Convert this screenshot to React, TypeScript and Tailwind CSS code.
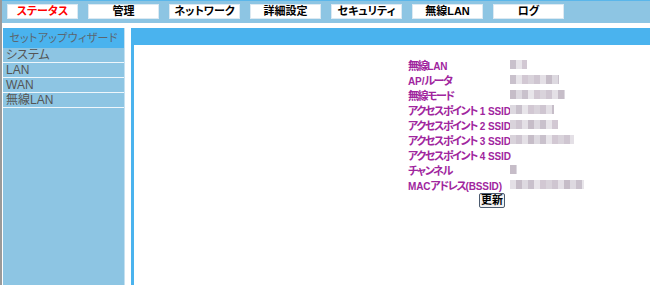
import React from "react";

const tabs = ["ステータス", "管理", "ネットワーク", "詳細設定", "セキュリティ", "無線LAN", "ログ"];
const menu = ["システム", "LAN", "WAN", "無線LAN"];

// ぼかし済みの値（幅はピクセル数）
const rows: { label: string; blur: number }[] = [
	{ label: "無線LAN", blur: 17 },
	{ label: "AP/ルータ", blur: 49 },
	{ label: "無線モード", blur: 55 },
	{ label: "アクセスポイント 1 SSID", blur: 44 },
	{ label: "アクセスポイント 2 SSID", blur: 48 },
	{ label: "アクセスポイント 3 SSID", blur: 64 },
	{ label: "アクセスポイント 4 SSID", blur: 0 },
	{ label: "チャンネル", blur: 7 },
	{ label: "MACアドレス(BSSID)", blur: 74 },
];

const shades = ["#d9d3db", "#c9c1cc", "#e4e0e6", "#d2c8d3", "#ddd9e0", "#cfc6d1", "#e8e5ea", "#c6bdc8"];

function Blur({ width }: { width: number }) {
	const cells = Math.ceil(width / 6);
	return (
		<div className="flex h-[9px] overflow-hidden" style={{ width }}>
			{Array.from({ length: cells }).map((_, i) => (
				<div
					key={i}
					className="h-full w-[6px] shrink-0"
					style={{ backgroundColor: shades[(i * 5 + width) % shades.length] }}
				/>
			))}
		</div>
	);
}

// 英数字と日本語で字幅を変える
function Label({ text }: { text: string }) {
	const parts = text.match(/[\x20-\x7e]+|[^\x20-\x7e]+/g) ?? [];
	return (
		<>
			{parts.map((p, i) =>
				/^[\x20-\x7e]+$/.test(p) ? (
					<span key={i} className="text-[10px] tracking-[-0.1px]">
						{p}
					</span>
				) : (
					<span key={i} className="text-[11px] tracking-[-1.4px]">
						{p}
					</span>
				),
			)}
		</>
	);
}

export default function App() {
	return (
		<div className="flex h-[285px] w-[650px] flex-col overflow-hidden border-l-2 border-[#9a9a9a] bg-white font-['Liberation_Sans','Noto_Sans_CJK_JP',sans-serif] [font-feature-settings:'palt']">
			<div className="flex h-[23px] shrink-0 items-start gap-[10px] border-t border-[#5ab6ea] bg-[#8dc5e3] pl-[5px] pt-[3px]">
				{tabs.map((t, i) => (
					<div
						key={t}
						className={`flex h-[15px] w-[71px] items-center justify-center border border-[#dce9f2] bg-white text-[11px] font-bold leading-none ${i === 0 ? "text-[#ff0000]" : "text-black"}`}
					>
						{t}
					</div>
				))}
			</div>
			<div className="flex flex-1 pt-[5px]">
				<div className="ml-[1px] flex w-[122px] flex-col border-r border-[#c4e0f0] bg-[#8dc5e3]">
					<div className="flex h-[20px] items-center justify-center whitespace-nowrap bg-[#4ab3ee] text-[11px] leading-none tracking-[0.3px] text-[#5b6670]">
						セットアップウィザード
					</div>
					{menu.map((m) => (
						<div
							key={m}
							className="flex h-[15px] items-center border-b border-[#eef6fb] pl-[3px] text-[12px] leading-none text-[#555]"
						>
							{m}
						</div>
					))}
				</div>
				<div className="ml-[6px] flex flex-1 flex-col border-l-[3px] border-[#4ab3ee]">
					<div className="h-[17px] bg-[#4ab3ee]" />
					<div className="flex flex-1 flex-col items-start pl-[274px] pt-[12px]">
						{rows.map((r) => (
							<div key={r.label} className="flex h-[15px] items-center">
								<div className="w-[102px] whitespace-nowrap font-bold leading-none text-[#a0259e]">
									<Label text={r.label} />
								</div>
								{r.blur > 0 && <Blur width={r.blur} />}
							</div>
						))}
						<button
							type="button"
							className="ml-[71px] mt-[1px] flex h-[15px] w-[26px] items-center justify-center rounded-[2px] border border-[#4b5a6e] bg-[#f2f2f2] text-[11px] font-bold leading-none text-black"
						>
							更新
						</button>
					</div>
				</div>
			</div>
		</div>
	);
}
